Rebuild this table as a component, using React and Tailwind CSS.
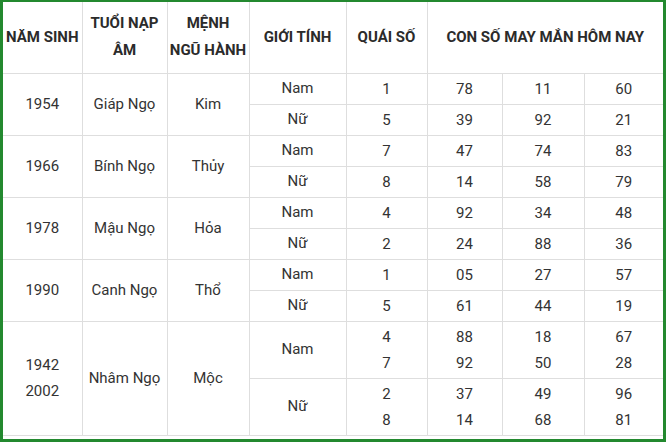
import React from 'react';

const groups = [
  {
    year: ['1954'], tuoi: 'Giáp Ngọ', menh: 'Kim',
    rows: [
      { sex: 'Nam', q: ['1'], n: [['78'], ['11'], ['60']] },
      { sex: 'Nữ', q: ['5'], n: [['39'], ['92'], ['21']] },
    ],
  },
  {
    year: ['1966'], tuoi: 'Bính Ngọ', menh: 'Thủy',
    rows: [
      { sex: 'Nam', q: ['7'], n: [['47'], ['74'], ['83']] },
      { sex: 'Nữ', q: ['8'], n: [['14'], ['58'], ['79']] },
    ],
  },
  {
    year: ['1978'], tuoi: 'Mậu Ngọ', menh: 'Hỏa',
    rows: [
      { sex: 'Nam', q: ['4'], n: [['92'], ['34'], ['48']] },
      { sex: 'Nữ', q: ['2'], n: [['24'], ['88'], ['36']] },
    ],
  },
  {
    year: ['1990'], tuoi: 'Canh Ngọ', menh: 'Thổ',
    rows: [
      { sex: 'Nam', q: ['1'], n: [['05'], ['27'], ['57']] },
      { sex: 'Nữ', q: ['5'], n: [['61'], ['44'], ['19']] },
    ],
  },
  {
    year: ['1942', '2002'], tuoi: 'Nhâm Ngọ', menh: 'Mộc', tall: true,
    rows: [
      { sex: 'Nam', q: ['4', '7'], n: [['88', '92'], ['18', '50'], ['67', '28']] },
      { sex: 'Nữ', q: ['2', '8'], n: [['37', '14'], ['49', '68'], ['96', '81']] },
    ],
  },
];

const cell = 'border border-[#dedede] text-center align-middle p-0';

function Lines({ items }) {
  return items.map((t, i) => (
    <div key={i} className="leading-[26px]">{t}</div>
  ));
}

export default function App() {
  return (
    <div
      className="w-[666px] h-[442px] bg-white border-[#23892f] border-t-2 border-x-[3px] border-b-[3px] overflow-hidden text-[#333]"
      style={{ fontFamily: 'Roboto, "Noto Sans", sans-serif' }}
    >
      <table className="table-fixed border-collapse w-[660px] text-[15px]">
        <colgroup>
          <col className="w-[79px]" />
          <col className="w-[85px]" />
          <col className="w-[82px]" />
          <col className="w-[97px]" />
          <col className="w-[81px]" />
          <col className="w-[75px]" />
          <col className="w-[82px]" />
          <col className="w-[79px]" />
        </colgroup>
        <thead>
          <tr className="h-[71px] font-bold text-[#2b2b2b] leading-[27px]">
            <th className={`${cell} border-t-0 border-l-0`}>NĂM SINH</th>
            <th className={`${cell} border-t-0`}>TUỔI NẠP<br />ÂM</th>
            <th className={`${cell} border-t-0`}>MỆNH<br />NGŨ HÀNH</th>
            <th className={`${cell} border-t-0`}>GIỚI TÍNH</th>
            <th className={`${cell} border-t-0`}>QUÁI SỐ</th>
            <th colSpan={3} className={`${cell} border-t-0 border-r-0`}>CON SỐ MAY MẮN HÔM NAY</th>
          </tr>
        </thead>
        <tbody>
          {groups.map((g) =>
            g.rows.map((r, ri) => (
              <tr key={g.tuoi + ri} className={g.tall ? 'h-[57px]' : 'h-[31px]'}>
                {ri === 0 && (
                  <>
                    <td rowSpan={2} className={`${cell} border-l-0`}>
                      <Lines items={g.year} />
                    </td>
                    <td rowSpan={2} className={cell}>{g.tuoi}</td>
                    <td rowSpan={2} className={cell}>{g.menh}</td>
                  </>
                )}
                <td className={cell}>{r.sex}</td>
                <td className={cell}><Lines items={r.q} /></td>
                {r.n.map((col, ci) => (
                  <td key={ci} className={`${cell} ${ci === 2 ? 'border-r-0' : ''}`}>
                    <Lines items={col} />
                  </td>
                ))}
              </tr>
            ))
          )}
        </tbody>
      </table>
    </div>
  );
}
